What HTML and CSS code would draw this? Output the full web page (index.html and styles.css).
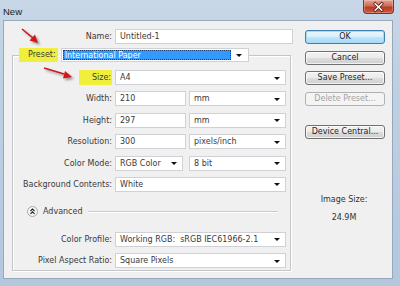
FILE: index.html
```html
<!DOCTYPE html>
<html>
<head>
<meta charset="utf-8">
<link rel="stylesheet" href="styles.css">
</head>
<body>
<div class="window">
  <div class="titlebar">
    <span class="title">New</span>
    <div class="close">
      <svg width="31" height="14" viewBox="0 0 31 14">
        <path d="M12 3.5 L19 10.5 M19 3.5 L12 10.5" stroke="#5a1a12" stroke-width="3.2" stroke-linecap="square"/>
        <path d="M12 3.5 L19 10.5 M19 3.5 L12 10.5" stroke="#ffffff" stroke-width="1.6" stroke-linecap="square"/>
      </svg>
    </div>
  </div>
  <div class="client">
    <div class="form">
      <div class="name-row">
        <span class="lbl">Name:</span>
        <div class="field">Untitled-1</div>
      </div>
      <fieldset class="group">
        <legend class="legend">
          <span class="hl preset-lbl">Preset:</span>
          <div class="field select preset-sel"><span class="sel-hl">International Paper</span><i class="arrow"></i></div>
        </legend>
        <div class="rows">
          <span class="lbl"><span class="hl size-hl">Size:</span></span>
          <div class="field select">A4<i class="arrow"></i></div>

          <span class="lbl">Width:</span>
          <div class="pair"><div class="field num">210</div><div class="field select unit">mm<i class="arrow"></i></div></div>

          <span class="lbl">Height:</span>
          <div class="pair"><div class="field num">297</div><div class="field select unit">mm<i class="arrow"></i></div></div>

          <span class="lbl">Resolution:</span>
          <div class="pair"><div class="field num">300</div><div class="field select unit">pixels/inch<i class="arrow"></i></div></div>

          <span class="lbl">Color Mode:</span>
          <div class="pair"><div class="field select mode">RGB Color<i class="arrow"></i></div><div class="field select unit">8 bit<i class="arrow"></i></div></div>

          <span class="lbl">Background Contents:</span>
          <div class="field select">White<i class="arrow"></i></div>

          <div class="advanced">
            <span class="adv-icon">
              <svg width="11" height="11" viewBox="0 0 11 11">
                <circle cx="5.5" cy="5.5" r="5" fill="#f4f4f4" stroke="#a8a8a8"/>
                <path d="M3.5 5 L5.5 3 L7.5 5 M3.5 7.8 L5.5 5.8 L7.5 7.8" fill="none" stroke="#222" stroke-width="1.1"/>
              </svg>
            </span>
            <span class="adv-text">Advanced</span>
            <span class="adv-line"></span>
          </div>

          <span class="lbl">Color Profile:</span>
          <div class="field select">Working RGB:&nbsp; sRGB IEC61966-2.1<i class="arrow"></i></div>

          <span class="lbl">Pixel Aspect Ratio:</span>
          <div class="field select">Square Pixels<i class="arrow"></i></div>
        </div>
      </fieldset>
    </div>
    <div class="side">
      <div class="btn default">OK</div>
      <div class="btn">Cancel</div>
      <div class="btn">Save Preset...</div>
      <div class="btn disabled">Delete Preset...</div>
      <div class="btn device">Device Central...</div>
      <div class="imgsize">
        <span>Image Size:</span>
        <span>24.9M</span>
      </div>
    </div>
  </div>
  <svg class="annot" width="400" height="286" viewBox="0 0 400 286">
    <defs>
      <filter id="sh" x="-50%" y="-50%" width="200%" height="200%">
        <feGaussianBlur stdDeviation="1.2"/>
      </filter>
    </defs>
    <g opacity="0.55" filter="url(#sh)" transform="translate(2,2)">
      <path d="M22 29 L33 38" stroke="#555" stroke-width="1.6"/>
      <path d="M38 43 L29.5 40.5 L35 34.5 Z" fill="#555"/>
      <path d="M44 68 L64 74" stroke="#555" stroke-width="1.6"/>
      <path d="M72 77 L63 78.5 L65 71 Z" fill="#555"/>
    </g>
    <path d="M22 29 L33 38" stroke="#d01818" stroke-width="1.6"/>
    <path d="M38 43 L29.5 40.5 L35 34.5 Z" fill="#d01818"/>
    <path d="M44 68 L64 74" stroke="#d01818" stroke-width="1.6"/>
    <path d="M72 77 L63 78.5 L65 71 Z" fill="#d01818"/>
  </svg>
</div>
</body>
</html>
```

FILE: styles.css
```css
* { box-sizing: border-box; }
html, body { margin: 0; padding: 0; }
body {
  width: 400px;
  height: 286px;
  overflow: hidden;
  font-family: "DejaVu Sans", Verdana, sans-serif;
  font-size: 8px;
  color: #3a3a3a;
}
.window {
  position: relative;
  width: 400px;
  height: 286px;
  background: linear-gradient(to bottom, #c8d7e7 0px, #bfd1e4 60px, #b3c7dd 286px);
  display: flex;
  flex-direction: column;
}
.titlebar {
  height: 20px;
  display: flex;
  align-items: flex-start;
  justify-content: space-between;
  padding: 0 6px 0 3px;
}
.title {
  font-family: "Liberation Sans", Arial, sans-serif;
  font-size: 9.5px;
  color: #1a1a1a;
  margin-top: 6px;
}
.close {
  width: 31px;
  height: 14px;
  border: 1px solid #7a3328;
  border-top: none;
  border-radius: 0 0 4px 4px;
  background: linear-gradient(to bottom, #e4a293 0%, #cf6b57 45%, #bb3d22 55%, #c9583e 100%);
  display: flex;
  align-items: center;
  justify-content: center;
  box-shadow: inset 0 0 0 1px rgba(255,255,255,0.25);
}
.close svg { display: block; }
.client {
  height: 259px;
  margin: 0 7px 0 3px;
  background: #f0f0f0;
  border: 1px solid #97a8bb;
  display: grid;
  grid-template-columns: 292px 80px;
  column-gap: 9px;
}
.form { padding-top: 8px; }
.name-row {
  display: grid;
  grid-template-columns: 108px 178px;
  column-gap: 3px;
  height: 15px;
}
.lbl {
  text-align: right;
  white-space: nowrap;
  align-self: center;
  line-height: 13px;
}
.field {
  background: #ffffff;
  border: 1px solid #cfd1d4;
  height: 15px;
  display: flex;
  align-items: center;
  padding: 0 5px 0 4px;
  white-space: nowrap;
  color: #3a3a3a;
  line-height: 13px;
}
.select { justify-content: space-between; }
.arrow {
  display: block;
  width: 0;
  height: 0;
  border-left: 3px solid transparent;
  border-right: 3px solid transparent;
  border-top: 3px solid #111;
  margin-top: 1px;
  flex: none;
}
.group {
  margin: 4px 0 0 8px;
  padding: 0 4px 2px 6px;
  width: 279px;
  border: 1px solid #c4c7ca;
  box-shadow: 1px 1px 0 #ffffff, inset 1px 1px 0 #ffffff;
  min-width: 0;
}
.legend {
  padding: 0;
  display: flex;
  align-items: center;
  height: 14px;
}
.hl { background: #f0f03c; }
.preset-lbl {
  padding: 0 2px 0 9px;
  line-height: 14px;
  height: 14px;
}
.preset-sel {
  margin-left: 3px;
  width: 188px;
  height: 14px;
  padding: 1px 6px 1px 1px;
}
.sel-hl {
  width: 168px;
  height: 100%;
  background: #3399ff;
  color: #ffffff;
  padding-left: 2px;
  line-height: 12px;
  outline: 1px dotted #1a3e70;
  outline-offset: -1px;
}
.rows {
  display: grid;
  grid-template-columns: 93px 171px;
  column-gap: 3px;
  row-gap: 6.4px;
  padding-top: 8px;
}
.size-hl {
  padding: 1px 1px 1px 13px;
  display: inline-block;
  line-height: 13px;
}
.pair {
  display: flex;
  justify-content: space-between;
}
.num { width: 71px; }
.mode { width: 68px; }
.unit { width: 97px; }
.advanced {
  grid-column: 1 / -1;
  display: flex;
  align-items: center;
  height: 13px;
  margin: 6.6px 0 7.6px 0;
  padding: 0 8px 0 8px;
}
.adv-icon { display: block; width: 11px; height: 11px; }
.adv-icon svg { display: block; }
.adv-text { margin-left: 5px; color: #3a3a3a; }
.adv-line {
  flex: 1;
  margin-left: 5px;
  height: 2px;
  border-top: 1px solid #c9cbcd;
  border-bottom: 1px solid #ffffff;
  margin-top: 1px;
}
.side {
  display: flex;
  flex-direction: column;
  padding-top: 9px;
  gap: 6.7px;
}
.btn {
  height: 14px;
  border: 1px solid #707070;
  border-radius: 3px;
  background: linear-gradient(to bottom, #f2f2f2 0%, #ebebeb 50%, #dddddd 51%, #cfcfcf 100%);
  box-shadow: inset 0 0 0 1px rgba(255,255,255,0.7);
  display: flex;
  align-items: center;
  justify-content: center;
  color: #1e1e1e;
  line-height: 12px;
  white-space: nowrap;
}
.btn.default {
  border-color: #3c7fb1;
  box-shadow: inset 0 0 0 1px #a6dbf5;
  background: linear-gradient(to bottom, #eaf6fd 0%, #d9f0fc 50%, #bee6fd 51%, #a7d9f5 100%);
}
.btn.disabled {
  border-color: #adb2b5;
  background: #f4f4f4;
  color: #a3a3a3;
  box-shadow: none;
}
.btn.device { margin-top: 12.3px; }
.imgsize {
  margin-top: 48px;
  display: flex;
  flex-direction: column;
  align-items: center;
  gap: 6px;
  line-height: 12px;
  color: #333;
  padding-right: 2px;
}
.annot {
  position: absolute;
  left: 0;
  top: 0;
  pointer-events: none;
}
```
